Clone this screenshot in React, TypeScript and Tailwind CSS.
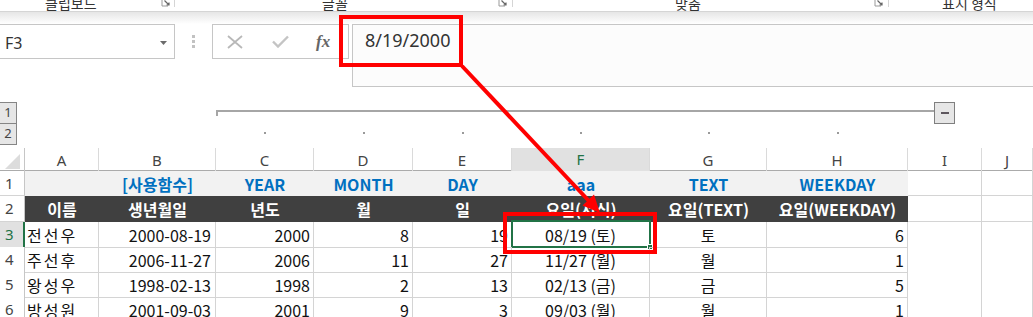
import React from 'react';

const KR = "font-[family-name:'Noto_Sans_CJK_KR',sans-serif]";
const UI = "font-[family-name:'Noto_Sans','Noto_Sans_CJK_KR',sans-serif]";
const GRID = 'grid grid-cols-[25px_74px_117px_98px_99px_99px_138px_117px_141px_74px_1fr]';

const letters = ['A', 'B', 'C', 'D', 'E', 'F', 'G', 'H', 'I', 'J'];
const top = ['', '[사용함수]', 'YEAR', 'MONTH', 'DAY', 'aaa', 'TEXT', 'WEEKDAY'];
const heads = ['이름', '생년월일', '년도', '월', '일', '요일(서식)', '요일(TEXT)', '요일(WEEKDAY)'];
const data = [
  ['전선우', '2000-08-19', '2000', '8', '19', '08/19 (토)', '토', '6'],
  ['주선후', '2006-11-27', '2006', '11', '27', '11/27 (월)', '월', '1'],
  ['왕성우', '1998-02-13', '1998', '2', '13', '02/13 (금)', '금', '5'],
  ['방성원', '2001-09-03', '2001', '9', '3', '09/03 (월)', '월', '1'],
];
const aligns = [
  'justify-start pl-[2px] tracking-[2px]',
  'justify-end pr-[4px]',
  'justify-end pr-[3px]',
  'justify-end pr-[3px]',
  'justify-end pr-[3px]',
  'justify-center',
  'justify-center',
  'justify-end pr-[3px]',
];

// small dialog launcher glyph in the ribbon
const Launcher = () => (
  <svg width="10" height="8" viewBox="0 0 10 8">
    <path d="M1 0 V6 H7" fill="none" stroke="#9a9a9a" strokeWidth="1" />
    <path d="M3.5 0.5 L8 5 M8 2.5 V5 H5.5" fill="none" stroke="#666" strokeWidth="1.2" />
  </svg>
);

const RowHead: React.FC<{ n: number; active?: boolean }> = ({ n, active }) => (
  <div
    className={`flex items-center justify-start pl-[5px] border-b border-[#d4d4d4] text-[15px] ${UI} ${
      active
        ? 'bg-[#e1e1e1] text-[#217346] border-r-2 border-r-[#217346]'
        : 'bg-white text-[#444] border-r border-r-[#c6c6c6]'
    }`}
  >
    {n}
  </div>
);

const EmptyCell = () => <div className="border-r border-b border-[#d4d4d4] bg-white" />;

export default function App() {
  return (
    <div className="relative w-[1033px] h-[317px] overflow-hidden bg-white select-none">
      {/* ribbon group labels, cut off at the top */}
      <div className={`h-[12px] flex border-b border-[#d5d5d5] overflow-hidden text-[14px] leading-[14px] text-[#333] ${KR}`}>
        <div className="w-[175px] flex">
          <span className="ml-[45px] -mt-[4px]">클립보드</span>
          <div className="ml-auto mr-[3px]"><Launcher /></div>
          <div className="w-px h-[7px] bg-[#d5d5d5]" />
        </div>
        <div className="w-[338px] flex">
          <span className="ml-[147px] -mt-[4px]">글꼴</span>
          <div className="ml-auto mr-[4px]"><Launcher /></div>
          <div className="w-px h-[7px] bg-[#d5d5d5]" />
        </div>
        <div className="w-[376px] flex">
          <span className="ml-[162px] -mt-[4px]">맞춤</span>
          <div className="ml-auto mr-[4px]"><Launcher /></div>
          <div className="w-px h-[7px] bg-[#d5d5d5]" />
        </div>
        <div className="flex-1 flex">
          <span className="ml-[53px] -mt-[4px]">표시 형식</span>
        </div>
      </div>
      <div className="h-[12px] bg-gradient-to-b from-[#e6e6e6] to-white" />

      {/* formula bar */}
      <div className="flex h-[63px]">
        <div className={`w-[175px] h-[35px] border-y border-r border-[#c6c6c6] bg-white flex items-center pl-[5px] pr-[7px] pt-[2px] text-[16px] text-[#333] ${UI}`}>
          <span>F3</span>
          <svg width="7" height="4" viewBox="0 0 7 4" className="ml-auto">
            <polygon points="0,0 7,0 3.5,4" fill="#6b6b6b" />
          </svg>
        </div>
        <div className="w-[37px] flex flex-col items-center pt-[11px] gap-[2px]">
          <div className="w-[3px] h-[3px] bg-[#c2c2c2]" />
          <div className="w-[3px] h-[3px] bg-[#c2c2c2]" />
          <div className="w-[3px] h-[3px] bg-[#c2c2c2]" />
        </div>
        <div className="w-[137px] h-[35px] border border-[#c6c6c6] bg-white flex items-center pl-[14px]">
          <svg width="16" height="14" viewBox="0 0 16 14">
            <path d="M1 1 L15 13 M15 1 L1 13" stroke="#b8b8b8" strokeWidth="1.8" fill="none" />
          </svg>
          <svg width="17" height="13" viewBox="0 0 17 13" className="ml-[29px]">
            <polyline points="1,6.5 6,11.5 16,1.5" stroke="#c4c4c4" strokeWidth="2.4" fill="none" />
          </svg>
          <span className="ml-[27px] text-[17px] italic font-bold text-[#666] font-[family-name:'Liberation_Serif',serif]">fx</span>
        </div>
        <div className="w-[3px]" />
        <div className={`flex-1 h-[63px] border border-r-0 border-[#c6c6c6] bg-[#fcfcfc] pl-[12px] pt-[3px] text-[18px] leading-[24px] text-[#333] ${UI}`}>
          8/19/2000
        </div>
      </div>

      {/* outline area */}
      <div className={`h-[61px] pt-[15px] text-[13px] text-[#444] ${UI}`}>
        <div className="flex h-[21px]">
          <div className="w-[18px] h-[22px] -ml-px border border-[#858585] bg-[#e6e6e6] flex items-center justify-center">1</div>
          <div className="ml-[199px] mt-[8px] w-[718px] h-[6px] border-t-2 border-l-2 border-[#a6a6a6]" />
          <div className="w-[21px] h-[22px] border border-[#7f7f7f] bg-[#e6e6e6] flex items-center justify-center">
            <div className="w-[8px] h-[2px] bg-[#5e575e]" />
          </div>
        </div>
        <div className={`${GRID} h-[22px]`}>
          <div className="w-[18px] h-[22px] -ml-px border border-[#858585] bg-[#e6e6e6] flex items-center justify-center">2</div>
          {letters.map((l, i) => (
            <div key={l} className="flex justify-center pt-[9px]">
              {i >= 2 && i <= 7 && <div className="w-[2px] h-[2px] bg-[#9a9a9a]" />}
            </div>
          ))}
        </div>
      </div>

      {/* column headers */}
      <div className={`${GRID} h-[23px] border-b border-[#ababab] text-[15px] ${UI}`}>
        <div className="border-r border-[#c6c6c6] flex items-end justify-end pr-[4px] pb-[4px]">
          <svg width="15" height="15" viewBox="0 0 15 15">
            <polygon points="15,0 15,15 0,15" fill="#dcdcdc" />
          </svg>
        </div>
        {letters.map((l) => (
          <div
            key={l}
            className={`flex items-center justify-center border-r border-[#dadada] ${
              l === 'F' ? 'bg-[#e1e1e1] text-[#217346] border-b-2 border-b-[#217346]' : 'text-[#444]'
            }`}
          >
            {l}
          </div>
        ))}
      </div>

      {/* row 1 */}
      <div className={`${GRID} h-[25px] text-[16px] ${KR}`}>
        <RowHead n={1} />
        {top.map((t, i) => (
          <div key={i} className="bg-[#f2f2f2] flex items-center justify-center font-bold text-[#0070c0]">
            {t}
          </div>
        ))}
        <EmptyCell />
        <EmptyCell />
      </div>

      {/* row 2 */}
      <div className={`${GRID} h-[26px] text-[16px] ${KR}`}>
        <RowHead n={2} />
        {heads.map((t, i) => (
          <div key={i} className="bg-[#404040] flex items-center justify-center font-bold text-white">
            {t}
          </div>
        ))}
        <EmptyCell />
        <EmptyCell />
      </div>

      {/* data rows */}
      {data.map((row, r) => (
        <div key={r} className={`${GRID} h-[25px] text-[16px] text-[#111] ${KR}`}>
          <RowHead n={r + 3} active={r === 0} />
          {row.map((v, i) => (
            <div
              key={i}
              className={`relative flex items-center pt-[1px] border-r border-b border-[#d4d4d4] ${aligns[i]}`}
            >
              {v}
              {r === 0 && i === 5 && (
                <div className="absolute -left-[1px] -top-[2px] -right-[2px] -bottom-[1px] border-2 border-[#217346]">
                  <div className="absolute -right-[4px] -bottom-[4px] w-[6px] h-[6px] bg-[#217346] border border-white" />
                </div>
              )}
            </div>
          ))}
          <EmptyCell />
          <EmptyCell />
        </div>
      ))}

      {/* red annotation overlay */}
      <svg className="absolute inset-0 pointer-events-none" width="1033" height="317">
        <rect x="341" y="17" width="120" height="48" fill="none" stroke="#ff0000" strokeWidth="4" />
        <rect x="505" y="214" width="150" height="38" fill="none" stroke="#ff0000" strokeWidth="4" />
        <line x1="462" y1="66" x2="589" y2="201" stroke="#ff0000" strokeWidth="4" />
        <polygon points="600,213 582.5,205.5 594,194.5" fill="#ff0000" />
      </svg>
    </div>
  );
}
